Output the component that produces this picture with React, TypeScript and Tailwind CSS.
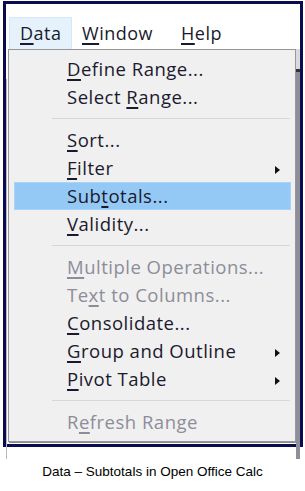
import React from "react";

type Item =
  | { kind: "sep" }
  | { kind: "item"; pre: string; u: string; post: string; disabled?: boolean; sub?: boolean; active?: boolean };

const items: Item[] = [
  { kind: "item", pre: "", u: "D", post: "efine Range..." },
  { kind: "item", pre: "Select ", u: "R", post: "ange..." },
  { kind: "sep" },
  { kind: "item", pre: "", u: "S", post: "ort..." },
  { kind: "item", pre: "", u: "F", post: "ilter", sub: true },
  { kind: "item", pre: "Sub", u: "t", post: "otals...", active: true },
  { kind: "item", pre: "", u: "V", post: "alidity..." },
  { kind: "sep" },
  { kind: "item", pre: "", u: "M", post: "ultiple Operations...", disabled: true },
  { kind: "item", pre: "Te", u: "x", post: "t to Columns...", disabled: true },
  { kind: "item", pre: "", u: "C", post: "onsolidate..." },
  { kind: "item", pre: "", u: "G", post: "roup and Outline", sub: true },
  { kind: "item", pre: "", u: "P", post: "ivot Table", sub: true },
  { kind: "sep" },
  { kind: "item", pre: "R", u: "e", post: "fresh Range", disabled: true },
];

function Arrow() {
  return (
    <svg width="5" height="8" viewBox="0 0 5 8" className="block">
      <path d="M0 0 L5 4 L0 8 Z" fill="#111" />
    </svg>
  );
}

export default function App() {
  return (
    <div
      className="w-[305px] h-[491px] bg-white overflow-hidden"
      style={{ fontFamily: '"Open Sans", "Noto Sans", sans-serif' }}
    >
      <div className="ml-[3px] mt-[1px] w-[300px] h-[446px] border-[3px] border-[#0b0b52] bg-white flex flex-col">
        {/* menubar */}
        <div className="h-[45px] flex items-start pt-[13px] text-[18px] font-medium tracking-[0.5px] leading-[32px] text-[#1a1a2e]">
          <div className="ml-[3px] w-[63px] h-[32px] pl-[10px] bg-[#e5f1fb] border border-[#d4e8f8] border-b-0 leading-[30px]">
            <span className="underline decoration-[1.5px] underline-offset-[3px]">D</span>ata
          </div>
          <div className="w-[99px] pl-[10px]">
            <span className="underline decoration-[1.5px] underline-offset-[3px]">W</span>indow
          </div>
          <div className="pl-[10px]">
            <span className="underline decoration-[1.5px] underline-offset-[3px]">H</span>elp
          </div>
        </div>
        {/* body */}
        <div className="flex flex-1">
          <div className="w-[2px] flex flex-col">
            <div className="h-[30px]" />
            <div className="w-[1px] h-[380px] bg-[#b9b9c4]" />
          </div>
          <div className="w-[288px] h-[393px] border border-[#979797] bg-[#f0f0f0] pt-[5px] pl-[5px] pr-[4px] pb-[4px] shadow-[1px_1px_0_#8c8c8c]">
            {items.map((it, i) =>
              it.kind === "sep" ? (
                <div key={i} className="h-[15px] flex items-center">
                  <div className="ml-[38px] mr-[1px] flex-1 h-[1px] bg-[#d7d7d7]" />
                </div>
              ) : (
                <div
                  key={i}
                  className={
                    "h-[28px] flex items-center pl-[53px] pr-[11px] text-[18.5px] font-medium tracking-[0.5px] leading-[28px] " +
                    (it.active ? "bg-[#94c9f6] border border-[#a9d3f7] " : "") +
                    (it.disabled ? "text-[#8d8d99]" : "text-[#1a1a2e]")
                  }
                  style={it.active ? { paddingLeft: 52 } : undefined}
                >
                  <span className="flex-1 whitespace-nowrap">
                    {it.pre}
                    <span className="underline decoration-[1.5px] underline-offset-[3px]">{it.u}</span>
                    {it.post}
                  </span>
                  {it.sub ? (
                    <span className="pt-[4px]">
                      <Arrow />
                    </span>
                  ) : null}
                </div>
              )
            )}
          </div>
          <div className="flex-1 flex flex-col bg-[#a7a7b4]">
            <div className="h-[20px] bg-[#d9d9de]" />
            <div className="h-[3px] bg-[#333]" />
            <div className="flex-1 bg-[#8f8f9c]" />
          </div>
        </div>
      </div>
      <div
        className="mt-[17px] text-center text-[13.5px] leading-[16px] text-black"
        style={{ fontFamily: '"Liberation Sans", Arial, sans-serif' }}
      >
        Data – Subtotals in Open Office Calc
      </div>
    </div>
  );
}
